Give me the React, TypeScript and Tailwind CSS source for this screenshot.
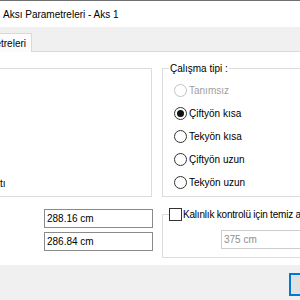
import React from "react";

const radios = [
  { label: "Tanımsız", disabled: true, checked: false },
  { label: "Çiftyön kısa", disabled: false, checked: true },
  { label: "Tekyön kısa", disabled: false, checked: false },
  { label: "Çiftyön uzun", disabled: false, checked: false },
  { label: "Tekyön uzun", disabled: false, checked: false },
];

function Radio({ checked, disabled }: { checked: boolean; disabled: boolean }) {
  return (
    <span
      className={
        "flex h-[13px] w-[13px] shrink-0 items-center justify-center rounded-full border bg-white " +
        (disabled ? "border-[#c2c2c2]" : "border-[#333333]")
      }
    >
      {checked && <span className="h-[7px] w-[7px] rounded-full bg-[#111111]" />}
    </span>
  );
}

export default function App() {
  return (
    <div className="flex h-[300px] w-[300px] flex-col overflow-hidden bg-[#f0f0f0] font-['Liberation_Sans',Arial,sans-serif] text-[10px] text-black">
      <div className="h-px shrink-0 bg-[#707070]" />

      {/* title bar */}
      <div className="flex h-[26px] shrink-0 items-center bg-white pl-[3px] text-[10px]">
        Aksı Parametreleri - Aks 1
      </div>

      {/* tabs */}
      <div className="flex h-[24px] shrink-0 items-end">
        <div className="relative z-10 mb-[-1px] ml-[-39px] flex h-[19px] items-center border-x border-t border-[#d9d9d9] bg-[#fcfcfc] pl-[4px] pr-[5px]">
          Parametreleri
        </div>
      </div>

      {/* content panel */}
      <div className="flex h-[214px] shrink-0 flex-col border-t border-[#d9d9d9] bg-white pt-[10px]">
        <div className="flex">
          <div className="ml-[-60px] mt-[6px] h-[129px] w-[212px] shrink-0 border border-[#dcdcdc]">
            <div className="mt-[103px] flex h-[23px] items-center pl-[35px]">Donatı</div>
          </div>

          <fieldset className="ml-[10px] h-[135px] w-[150px] shrink-0 border border-[#dcdcdc] px-0">
            <legend className="ml-[6px] px-[1px] leading-[13px]">Çalışma tipi :</legend>
            <div className="mt-[4px] flex flex-col pl-[11px]">
              {radios.map((r) => (
                <div key={r.label} className="flex h-[23px] items-center gap-[2px]">
                  <Radio checked={r.checked} disabled={r.disabled} />
                  <span className={r.disabled ? "text-[#a0a0a0]" : ""}>{r.label}</span>
                </div>
              ))}
            </div>
          </fieldset>
        </div>

        <div className="mt-[11px] flex">
          <div className="ml-[44px] mt-[1px] flex w-[109px] shrink-0 flex-col gap-[4px]">
            <div className="flex h-[19px] items-center border border-[#8a8a8a] pl-[2px]">288.16 cm</div>
            <div className="flex h-[19px] items-center border border-[#8a8a8a] pl-[2px]">286.84 cm</div>
          </div>

          <fieldset className="ml-[9px] h-[50px] w-[170px] shrink-0 border border-[#dcdcdc] px-0">
            <legend className="ml-[6px] flex items-center gap-[1px] pr-[1px] leading-[13px]">
              <span className="h-[13px] w-[13px] shrink-0 border border-[#333333] bg-white" />
              <span className="whitespace-nowrap tracking-[-0.2px]">Kalınlık kontrolü için temiz açıklık</span>
            </legend>
            <div className="ml-[58px] mt-[9px] flex h-[19px] w-[120px] items-center border border-[#cccccc] pl-[2px] text-[#8d8d8d]">
              375 cm
            </div>
          </fieldset>
        </div>
      </div>

      {/* bottom bar */}
      <div className="flex pt-[8px]">
        <div className="ml-[289px] h-[23px] w-[75px] shrink-0 border-2 border-[#0078d7] bg-[#e1e1e1]" />
      </div>
    </div>
  );
}
